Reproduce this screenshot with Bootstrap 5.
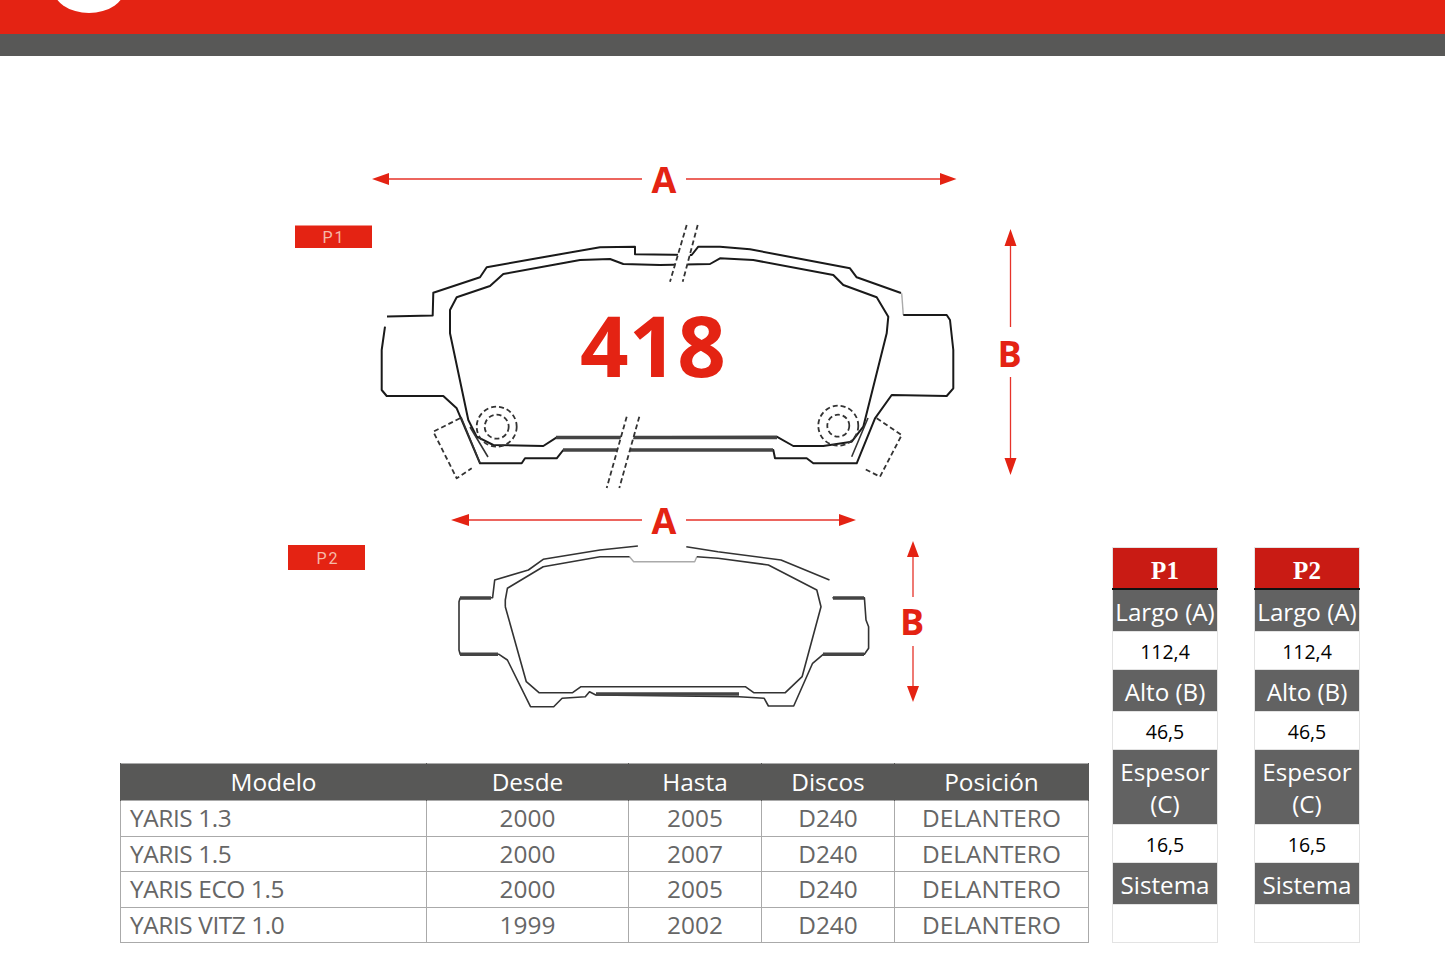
<!DOCTYPE html>
<html lang="es">
<head>
  <meta charset="UTF-8">
  <title>Pastilla 418</title>
  <link href="https://cdn.jsdelivr.net/npm/bootstrap@5.3.3/dist/css/bootstrap.min.css" rel="stylesheet">
  <style>
    body { font-family: "Open Sans", sans-serif; background: #fff; overflow: hidden; }
    .top-red { height: 34px; background: #e42313; }
    .top-gray { height: 22px; background: #585857; box-shadow: 0 1px 0 #bbb; }
    .logo-disc { width: 72px; height: 50px; top: -37px; left: 53px; background: #fff; border-radius: 50%; }
    .left-col { width: 969px; margin-left: 120px; }
    .drawing { display: block; width: 969px; height: 707px; }
    .pad path, .pad circle { fill: none; stroke: #1a1a1a; stroke-width: 2; stroke-linejoin: round; }
    .pad { filter: blur(.5px); }
    .pad .thin { stroke: #333; stroke-width: 1.6; }
    .pad .faint { stroke: #aaa; stroke-width: 1.4; }
    .pad .band { stroke: #444; stroke-width: 3.4; }
    .pad .dash { stroke: #333; stroke-dasharray: 5 3; stroke-width: 1.8; }
    .pad .gap { fill: #fff; stroke: none; }
    .dim-line { stroke: #e6332a; stroke-width: 1.3; }
    .dim-head { fill: #e42313; }
    .dim-label { font-family: "Open Sans", sans-serif; font-weight: 700; fill: #e42313; font-size: 36px; text-anchor: middle; }
    .code-label { font-family: "Open Sans", sans-serif; font-weight: 700; fill: #e42313; font-size: 85px; text-anchor: middle; }
    .tag { fill: #e42313; }
    .tag-text { font-family: "Roboto", sans-serif; fill: #f6b9a8; font-size: 16px; letter-spacing: 2px; text-anchor: middle; }
    .apps { table-layout: fixed; width: 968px; font-size: 24.4px; border-color: #aaa; }
    .apps > :not(caption) > * > * { padding: 0; color: #666; line-height: 34.5px; border-color: #aaa; box-shadow: none; }
    .apps thead th { background: #585857; color: #fff; font-weight: 400; line-height: 36px; border-color: #585857; }
    .apps .model { padding-left: 9px; text-align: left; letter-spacing: -.4px; }
    .specs { margin-left: 23px; gap: 36px; }
    .spec { table-layout: fixed; width: 106px; border-color: #e3e3e3; }
    .spec > :not(caption) > * > * { padding: 0; text-align: center; border-color: #e3e3e3; box-shadow: none; }
    .spec thead th { background: #c91b14; color: #fff; font-family: "Liberation Serif", serif; font-size: 25px; line-height: 34px; padding-top: 6px; border-bottom: 2px solid #111; }
    .spec tbody th { background: #626262; color: #fff; font-weight: 400; font-size: 24.2px; line-height: 32px; padding: 6px 0 3px; }
    .spec tbody th.tall { padding-bottom: 4px; }
    .spec tbody td { color: #000; font-size: 19.5px; height: 38px; line-height: 34px; padding-top: 3px; }
  </style>
</head>
<body>
  <header class="position-relative overflow-hidden">
    <div class="top-red"></div>
    <div class="top-gray"></div>
    <div class="logo-disc position-absolute"></div>
  </header>

  <main class="d-flex align-items-end">
    <div class="left-col">
      <svg class="drawing" viewBox="120 56 969 707" xmlns="http://www.w3.org/2000/svg">
        <!-- pastilla P1 -->
        <g class="pad">
          <path d="M387 316.500 L432.700 315.500 L433.300 292.700 L480 277.300 L486.700 267.300 L540 257.700 L600 247.300 L635 246.700 L635 254.300 L691.700 255 L698.300 246.700 L720 246.700 L750 249.300 L780 255 L850 268.300 L856.700 277.300 L901 293"/>
          <path class="faint" d="M901.700 293.300 L903.300 315"/>
          <path d="M903.300 315 L946.700 315 L950 320 L953.300 350 L953.300 388.300 L946.700 396 L891.700 395 L875 418.300 L856.700 463.300 L813.300 463.300 L806.700 458.300 L775 458.300 L773.300 450 L563.300 450 L556.700 458.300 L525 458.300 L521.700 463.300 L480 463.300 L456.700 408.300 L443.300 396 L386.700 396 L381.700 390 L381.700 350 L385 326.700"/>
          <path d="M660 265 L710 264 L720 258.300 L753.300 260 L833.300 275 L843.300 285 L876.700 297.300 L888.300 316.700 L886.700 333.300 L863.300 426.700 L851.700 441.700 L823.300 446 L793.300 446 L776.700 436.700 L556.700 437.300 L543.300 446 L493.300 445 L476.700 436.700 L468.300 420 L450 333.300 L450 310 L456.700 297.300 L490 286 L503.300 274 L580 260 L610 259 L623.300 264 L660 265"/>
          <path class="band" d="M556 437.500 H777 M563 450 H773"/>
          <path class="thin" d="M461 417 L480 463 M470 427 L488 457 M868 418 L851.700 456.700"/>
          <circle class="dash" cx="496.700" cy="426.700" r="20"/>
          <circle class="dash" cx="496.700" cy="426.700" r="12"/>
          <circle class="dash" cx="838.300" cy="425.700" r="20"/>
          <circle class="dash" cx="838.300" cy="425.700" r="11"/>
          <path class="dash" d="M460 418.300 L433.300 431.700 L456.700 478.300 L471.700 468.300"/>
          <path class="dash" d="M876.700 418.300 L901.700 435 L880 476.700 L863.300 468.300"/>
          <path class="gap" d="M686.700 225 H697.700 L682.700 281.700 H670 Z"/>
          <path class="gap" d="M626.700 416.700 H639.300 L619.300 488 H606.700 Z"/>
          <path class="dash" d="M686.700 225 L670 281.700 M697.700 225 L682.700 281.700"/>
          <path class="dash" d="M626.700 416.700 L606.700 488 M639.300 416.700 L619.300 488"/>
        </g>

        <!-- pastilla P2 -->
        <g class="pad">
          <path class="thin" d="M460.200 597.700 L492.600 597.700 L494.700 580 L528.400 570 L543.200 559.300 L600 550 L637.900 546"/>
          <path class="thin" d="M686.300 546.700 L717.900 551.700 L781 560 L829.500 580"/>
          <path class="faint" d="M629.500 556.700 L633.700 561.700 L694.700 561.700 L696.800 556.700"/>
          <path class="thin" d="M832.400 597.700 L864.400 597.700 L866 620 L868.600 626.700 L868.600 648.300 L864.400 654.300 L823.200 654.300 L812.600 663.300 L793.700 706 L768.400 706 L764.200 698.300 L739 696.700 L595.800 695 L589.500 691.700 L585.300 696.700 L562.100 698.300 L553.700 706.700 L530.500 706.700 L507.400 660 L499 654.300 L460.200 654.300 L459 650 L459 601.700 L460.200 597.700"/>
          <path class="thin" d="M505.300 606.700 L505.300 600 L507.400 588.300 L543.200 566.700 L600 556.700 L629.500 556.700 M696.800 556.700 L718 558.300 L768.400 565 L816.800 590 L821 606.700 L802.100 676.700 L785.300 692.700 L753.700 692.700 L745.300 686.700 L581 686.700 L572.600 692.700 L539 692.700 L526.300 681.700 L505.300 606.700"/>
          <path class="band" d="M596 694 H739 M460 598 H491 M833 598 H864 M460 654.300 H498 M823 654.300 H864"/>
        </g>

        <!-- cotas P1 -->
        <path class="dim-line" d="M385 179 H642 M686 179 H945 M1010.500 242 V327 M1010.500 377 V462"/>
        <path class="dim-head" d="M372 179 L389 173 V185 Z M956.500 179 L940 173 V185 Z M1010.500 229 L1004.500 246 H1016.500 Z M1010.500 475 L1004.500 458 H1016.500 Z"/>
        <text class="dim-label" x="664" y="193">A</text>
        <text class="dim-label" x="1009.500" y="367">B</text>
        <text class="code-label" x="653" y="377">418</text>

        <!-- cotas P2 -->
        <path class="dim-line" d="M462 520 H642 M686 520 H845 M913 552 V597 M913 646 V690"/>
        <path class="dim-head" d="M451 520 L469 514 V526 Z M856 520 L839 514 V526 Z M913 541 L907 557 H919 Z M913 702 L907 686 H919 Z"/>
        <text class="dim-label" x="664" y="534">A</text>
        <text class="dim-label" x="912" y="635">B</text>

        <rect class="tag" x="295" y="225.500" width="77" height="22.500"/>
        <text class="tag-text" x="334" y="243">P1</text>
        <rect class="tag" x="288" y="545" width="77" height="25"/>
        <text class="tag-text" x="328" y="564">P2</text>
      </svg>

      <table class="table table-bordered apps text-center mb-0">
        <colgroup><col style="width:306px"><col style="width:202px"><col style="width:133px"><col style="width:133px"><col style="width:194px"></colgroup>
        <thead>
          <tr><th>Modelo</th><th>Desde</th><th>Hasta</th><th>Discos</th><th>Posición</th></tr>
        </thead>
        <tbody>
          <tr><td class="model">YARIS 1.3</td><td>2000</td><td>2005</td><td>D240</td><td>DELANTERO</td></tr>
          <tr><td class="model">YARIS 1.5</td><td>2000</td><td>2007</td><td>D240</td><td>DELANTERO</td></tr>
          <tr><td class="model">YARIS ECO 1.5</td><td>2000</td><td>2005</td><td>D240</td><td>DELANTERO</td></tr>
          <tr><td class="model">YARIS VITZ 1.0</td><td>1999</td><td>2002</td><td>D240</td><td>DELANTERO</td></tr>
        </tbody>
      </table>
    </div>

    <div class="d-flex specs">
      <table class="table table-bordered spec mb-0">
        <thead><tr><th>P1</th></tr></thead>
        <tbody>
          <tr><th>Largo (A)</th></tr><tr><td>112,4</td></tr>
          <tr><th>Alto (B)</th></tr><tr><td>46,5</td></tr>
          <tr><th class="tall">Espesor (C)</th></tr><tr><td>16,5</td></tr>
          <tr><th>Sistema</th></tr><tr><td></td></tr>
        </tbody>
      </table>
      <table class="table table-bordered spec mb-0">
        <thead><tr><th>P2</th></tr></thead>
        <tbody>
          <tr><th>Largo (A)</th></tr><tr><td>112,4</td></tr>
          <tr><th>Alto (B)</th></tr><tr><td>46,5</td></tr>
          <tr><th class="tall">Espesor (C)</th></tr><tr><td>16,5</td></tr>
          <tr><th>Sistema</th></tr><tr><td></td></tr>
        </tbody>
      </table>
    </div>
  </main>

  <script src="https://cdn.jsdelivr.net/npm/bootstrap@5.3.3/dist/js/bootstrap.bundle.min.js"></script>
</body>
</html>
